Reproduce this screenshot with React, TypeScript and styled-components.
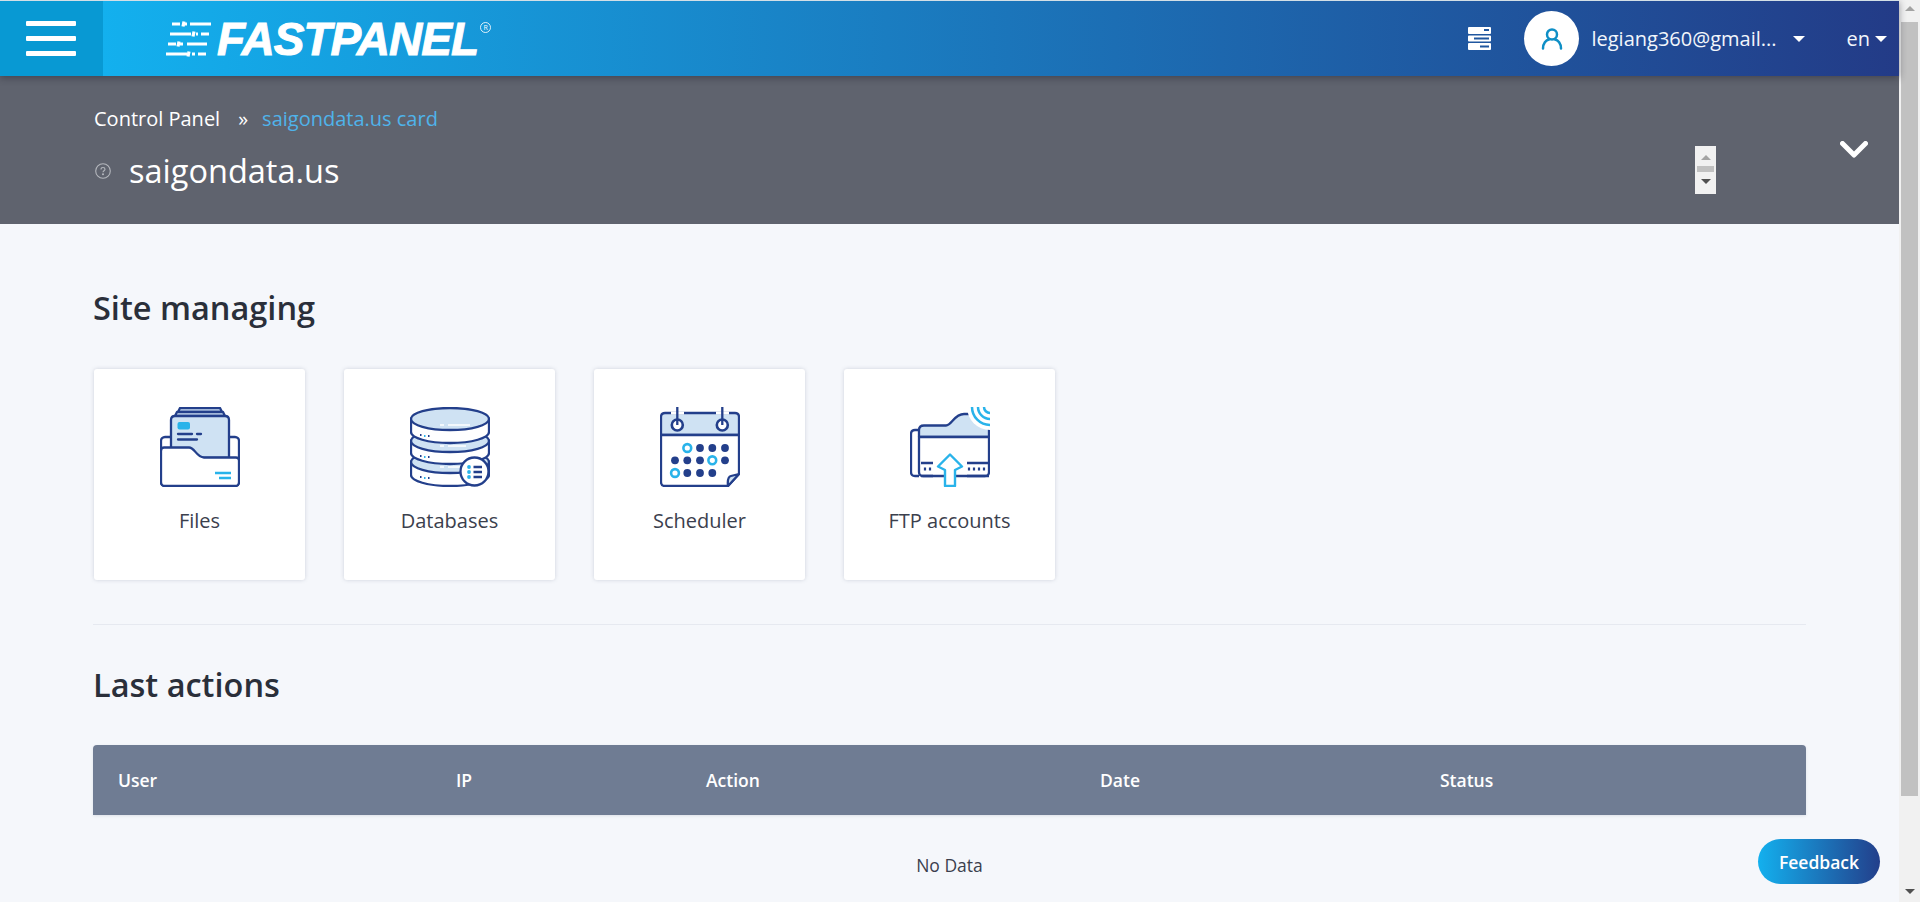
import React from 'react';
import styled, { createGlobalStyle } from 'styled-components';

const NAVY = '#233f8b';
const SKY = '#29b3ea';
const PALE = '#cfe2f3';

const GlobalStyle = createGlobalStyle`
  html, body {
    margin: 0;
    height: 100%;
    overflow: hidden;
    background: #f5f7fb;
    font-family: "Open Sans", "Noto Sans", "Liberation Sans", sans-serif;
  }
  * { box-sizing: border-box; }
`;

const Shell = styled.div`
  display: flex;
  width: 1920px;
  height: 902px;
  overflow: hidden;
`;

const Page = styled.div`
  position: relative;
  width: 1899px;
  flex: none;
  display: flex;
  flex-direction: column;
`;

const Header = styled.header`
  position: relative;
  z-index: 2;
  height: 76px;
  flex: none;
  display: flex;
  align-items: stretch;
  border-top: 1px solid #d3dfe6;
  background: linear-gradient(90deg, #13b0ee 103px, #233b87 100%);
  box-shadow: 0 2px 7px rgba(30, 34, 44, 0.45);
  color: #fff;
`;

const BurgerBlock = styled.div`
  width: 103px;
  flex: none;
  display: flex;
  flex-direction: column;
  justify-content: center;
  gap: 10px;
  padding: 0 27px 0 26px;
  background: #0899d3;
`;

const BurgerLine = styled.span`
  display: block;
  height: 5px;
  border-radius: 1px;
  background: #fff;
`;

const Logo = styled.div`
  display: flex;
  align-items: center;
  margin-left: 62px;
  gap: 6px;
`;

const LogoWord = styled.span`
  font-family: "Liberation Sans", sans-serif;
  font-style: italic;
  font-weight: 700;
  font-size: 46px;
  line-height: 1;
  letter-spacing: -1px;
  color: #fff;
  -webkit-text-stroke: 1px #fff;
`;

const LogoMark = styled.span`
  width: 11px;
  height: 11px;
  margin: -22px 0 0 -4px;
  display: flex;
  align-items: center;
  justify-content: center;
  border: 1px solid rgba(255, 255, 255, 0.85);
  border-radius: 50%;
  font-size: 7px;
  line-height: 1;
`;

const HeaderRight = styled.div`
  margin-left: auto;
  display: flex;
  align-items: center;
  padding-right: 12px;
`;

const Avatar = styled.div`
  width: 55px;
  height: 55px;
  margin-left: 33px;
  display: flex;
  align-items: center;
  justify-content: center;
  border-radius: 50%;
  background: #fff;
`;

const UserName = styled.span`
  margin-left: 12px;
  font-size: 20px;
  line-height: 24px;
  color: #f2f6fb;
`;

const Caret = styled.span<{ $gap: number }>`
  width: 0;
  height: 0;
  margin-left: ${(p) => p.$gap}px;
  border-left: 6px solid transparent;
  border-right: 6px solid transparent;
  border-top: 6px solid #fff;
`;

const Lang = styled.span`
  margin-left: 42px;
  font-size: 20px;
  line-height: 24px;
  color: #f2f6fb;
`;

const Band = styled.section`
  position: relative;
  height: 148px;
  flex: none;
  padding: 30px 0 0 94px;
  background: #5f636e;
  color: #fff;
`;

const Crumbs = styled.div`
  display: flex;
  align-items: center;
  height: 24px;
  font-size: 20px;
`;

const CrumbArrow = styled.span`
  margin: 0 14px 0 18px;
`;

const CrumbLink = styled.span`
  color: #4fb3ea;
`;

const TitleRow = styled.div`
  display: flex;
  align-items: center;
  gap: 18px;
  height: 40px;
  margin-top: 21px;
  padding-left: 1px;
`;

const Title = styled.h1`
  margin: 0;
  font-size: 32.5px;
  font-weight: 400;
  line-height: 40px;
`;

const MiniScroll = styled.div`
  position: absolute;
  left: 1695px;
  top: 70px;
  width: 21px;
  height: 48px;
  display: flex;
  flex-direction: column;
  align-items: center;
  padding-top: 9px;
  background: #f1f1f1;
`;

const MiniThumb = styled.span`
  width: 17px;
  height: 6px;
  margin: 6px 0 7px;
  background: #c1c1c1;
`;

const Arrow = styled.span<{ $dir: 'up' | 'down'; $color: string }>`
  width: 0;
  height: 0;
  flex: none;
  border-left: 5px solid transparent;
  border-right: 5px solid transparent;
  ${(p) => (p.$dir === 'up' ? 'border-bottom' : 'border-top')}: 5px solid ${(p) => p.$color};
`;

const Collapse = styled.div`
  position: absolute;
  left: 1840px;
  top: 65px;
  display: flex;
`;

const Content = styled.main`
  padding: 64px 93px 0;
`;

const Heading = styled.h2`
  margin: 0;
  font-size: 32.5px;
  font-weight: 600;
  line-height: 40px;
  color: #2a2f3a;
`;

const Cards = styled.div`
  display: flex;
  gap: 39px;
  margin: 41px 0 0 1px;
`;

const Card = styled.div`
  width: 211px;
  height: 211px;
  display: flex;
  flex-direction: column;
  align-items: center;
  padding-top: 38px;
  background: #fff;
  border-radius: 3px;
  box-shadow: 0 0 4px rgba(60, 70, 100, 0.2);
`;

const CardLabel = styled.span`
  margin-top: 22px;
  font-size: 20px;
  line-height: 24px;
  color: #3b404d;
`;

const Divider = styled.hr`
  height: 1px;
  margin: 44px 0 40px;
  border: 0;
  background: #e6e9f0;
`;

const TableHead = styled.div`
  display: grid;
  grid-template-columns: 338px 250px 394px 340px 391px;
  align-items: center;
  height: 70px;
  margin-top: 40px;
  border-radius: 4px 4px 0 0;
  background: #6f7c93;
  box-shadow: 0 1px 3px rgba(60, 70, 100, 0.12);
`;

const HeadCell = styled.span`
  padding-left: 25px;
  font-size: 17.5px;
  font-weight: 600;
  line-height: 24px;
  color: #fff;
`;

const Empty = styled.div`
  height: 100px;
  display: flex;
  align-items: center;
  justify-content: center;
  font-size: 17.5px;
  color: #3b404d;
`;

const Feedback = styled.button`
  position: absolute;
  left: 1758px;
  top: 839px;
  width: 122px;
  height: 45px;
  padding: 0;
  border: 0;
  border-radius: 23px;
  background: linear-gradient(90deg, #13b0ee, #233f8b);
  color: #fff;
  font-family: inherit;
  font-size: 17.5px;
  font-weight: 600;
`;

const Scrollbar = styled.aside`
  width: 21px;
  flex: none;
  display: flex;
  flex-direction: column;
  align-items: center;
  background: #f1f1f1;
`;

const ScrollThumb = styled.div`
  width: 17px;
  height: 774px;
  margin-top: 5px;
  background: #c1c1c1;
`;

const ScrollEnd = styled.div`
  height: 17px;
  display: flex;
  align-items: center;
  justify-content: center;
`;

const ScrollEndBottom = styled(ScrollEnd)`
  margin-top: auto;
  height: 22px;
`;

const LogoIcon = () => (
  <svg width="46" height="36" viewBox="0 0 46 36" fill="none" stroke="#fff" strokeWidth="2.800">
    <path d="M7 3h8M19 3h3M25 3h21" />
    <path d="M5 13h21M31 13h2M36 13h8" />
    <path d="M3 23h8M15 23h3M22 23h20" />
    <path d="M1 33h21M27 33h3M33 33h8" />
    <path d="M19 0.500l-1 5M29 10.500l-1 5M14 20.500l-1 5M24 30.500l-1 5" strokeWidth="3.200" />
  </svg>
);

const ServerIcon = () => (
  <svg width="23" height="23" viewBox="0 0 23 23">
    <path
      fill="#fff"
      fillRule="evenodd"
      d="M1 0h21a1 1 0 0 1 1 1v5a1 1 0 0 1-1 1H1a1 1 0 0 1-1-1V1a1 1 0 0 1 1-1zm15 2v2h5V2zM1 8.500h21a1 1 0 0 1 1 1v4a1 1 0 0 1-1 1H1a1 1 0 0 1-1-1v-4a1 1 0 0 1 1-1zm5 2v2h15v-2zM1 16h21a1 1 0 0 1 1 1v5a1 1 0 0 1-1 1H1a1 1 0 0 1-1-1v-5a1 1 0 0 1 1-1zm11 2.500v2h9v-2z"
    />
  </svg>
);

const PersonIcon = () => (
  <svg width="22" height="22" viewBox="0 0 22 22" fill="none" stroke="#0f8fc6" strokeWidth="2.500">
    <circle cx="11" cy="6.500" r="5" />
    <path d="M2 20.500c0-5 3-8.500 6-9M20 20.500c0-5-3-8.500-6-9" strokeLinecap="round" />
  </svg>
);

const HelpIcon = () => (
  <svg width="16" height="16" viewBox="0 0 16 16" fill="none" stroke="#b4b7bd" strokeWidth="1.100">
    <circle cx="8" cy="8" r="7.300" />
    <path d="M6 6.400c0-1.200.9-1.900 2-1.900s2 .7 2 1.800c0 1.500-2 1.500-2 3" />
    <circle cx="8" cy="11.300" r=".5" />
  </svg>
);

const Chevron = () => (
  <svg width="28" height="17" viewBox="0 0 28 17" fill="none" stroke="#fff" strokeWidth="5" strokeLinecap="round" strokeLinejoin="round">
    <path d="M2.500 2.500L14 14 25.500 2.500" />
  </svg>
);

const FilesIcon = () => (
  <svg width="80" height="80" viewBox="0 0 80 80" fill="none" stroke={NAVY} strokeWidth="2.300" strokeLinejoin="round">
    <rect x="1" y="30" width="78" height="49" rx="4" fill="#fff" />
    <path d="M18 5l2-4h40l2 4z" fill={PALE} />
    <path d="M15 9l2-4h46l2 4z" fill={PALE} />
    <path d="M11 51V13q0-4 4-4h50q4 0 4 4v38z" fill={PALE} />
    <rect x="17.500" y="15" width="12.500" height="7.500" rx="2" fill={SKY} stroke="none" />
    <path d="M18 27h14M37 27h4M18 32.500h19" strokeLinecap="round" />
    <path d="M1 44q0-3.500 3-3.500h25c6 0 7 9.500 15 10h32q3 0 3 3V75q0 4-4 4H5q-4 0-4-4z" fill="#fff" />
    <path d="M55 66h16M59 71h12" stroke={SKY} />
  </svg>
);

const DatabasesIcon = () => (
  <svg width="80" height="80" viewBox="0 0 80 80" fill="none" stroke={NAVY} strokeWidth="2.300">
    <path d="M1 55v13c0 6 17 11 39 11s39-5 39-11V55z" fill="#fff" />
    <ellipse cx="40" cy="55" rx="39" ry="11" fill={PALE} />
    <path d="M1 34v12c0 6 17 11 39 11s39-5 39-11V34z" fill="#fff" />
    <ellipse cx="40" cy="34" rx="39" ry="11" fill={PALE} />
    <path d="M1 12v13c0 6 17 11 39 11s39-5 39-11V12z" fill="#fff" />
    <ellipse cx="40" cy="12" rx="39" ry="11" fill={PALE} />
    <path d="M30 18h4M38 18h22M30 39h4M38 39h18M30 60h4M38 60h12" stroke="#fff" strokeWidth="1.500" />
    <path d="M10 28h1.500M18 29h1.500M10 49h1.500M18 50h1.500M10 70h1.500M18 71h1.500" strokeWidth="1.800" />
    <path d="M14 29h1.500M14 50h1.500M14 71h1.500" stroke={SKY} strokeWidth="1.800" />
    <circle cx="64.500" cy="64.500" r="14" fill="#fff" />
    <circle cx="59" cy="60" r="1.900" fill={SKY} stroke="none" />
    <circle cx="59" cy="65" r="1.900" fill={SKY} stroke="none" />
    <circle cx="59" cy="70" r="1.900" fill={SKY} stroke="none" />
    <path d="M63.500 60h8.500M63.500 65h8.500M63.500 70h8.500" />
  </svg>
);

const calendarDots: [number, number, boolean][] = [
  [27.3, 41, true], [40, 41, false], [52.3, 41, false], [65, 41, false],
  [15, 53.3, false], [27.3, 53.3, false], [40, 53.3, false], [52.3, 53.3, true], [65, 53.3, false],
  [15, 66, true], [27.3, 66, false], [40, 66, false], [52.3, 66, false],
];

const SchedulerIcon = () => (
  <svg width="80" height="80" viewBox="0 0 80 80" fill="none" stroke={NAVY} strokeWidth="2.300" strokeLinejoin="round">
    <path d="M1 28V10q0-4 4-4h70q4 0 4 4v18z" fill={PALE} />
    <path d="M1 28v47q0 4 4 4h63l11-12V28" fill="#fff" />
    <path d="M1 28h78" />
    <path d="M68 79q-1-9 3-10l8-2-11 12z" fill={PALE} />
    <path d="M11 6h13M56 6h13" stroke="#fff" strokeWidth="3" />
    <circle cx="17.300" cy="18" r="5.500" fill="#fff" strokeWidth="2.600" />
    <circle cx="62.300" cy="18" r="5.500" fill="#fff" strokeWidth="2.600" />
    <path d="M17.300 0v18M62.300 0v18" />
    {calendarDots.map(([x, y, ring]) =>
      ring ? (
        <circle key={`${x}-${y}`} cx={x} cy={y} r="3.900" fill="#fff" stroke={SKY} strokeWidth="2.600" />
      ) : (
        <circle key={`${x}-${y}`} cx={x} cy={y} r="3.900" fill={NAVY} stroke="none" />
      ),
    )}
  </svg>
);

const FtpIcon = () => (
  <svg width="80" height="80" viewBox="0 0 80 80" fill="none" stroke={NAVY} strokeWidth="2.300" strokeLinejoin="round">
    <path d="M9 69H5q-4 0-4-4V27q0-4 4-4h4" fill="#fff" />
    <path d="M9 30V23q0-4.500 5-4.500h22c6 0 8-11.500 18-11.500h10l15 14v9z" fill={PALE} />
    <path d="M9 30h70v35q0 4-4 4H13q-4 0-4-4z" fill="#fff" />
    <path d="M11 56h12M57 56h22M11 69h12M57 69h22" />
    <path d="M15 60.500v3M20 60.500v3M59 60.500v3M64 60.500v3M69 60.500v3M74 60.500v3" strokeWidth="2.200" />
    <circle cx="80" cy="0" r="23" fill="#fff" stroke="none" />
    <path d="M80 6a6 6 0 0 1-6-6M80 12a12 12 0 0 1-12-12M80 18a18 18 0 0 1-18-18" stroke={SKY} strokeWidth="2.500" />
    <path d="M40 47.500L28 59.500l7 3.500V79h10V63l7-3.500z" fill="#fff" stroke={SKY} strokeWidth="2.400" />
  </svg>
);

const cards = [
  { label: 'Files', icon: <FilesIcon /> },
  { label: 'Databases', icon: <DatabasesIcon /> },
  { label: 'Scheduler', icon: <SchedulerIcon /> },
  { label: 'FTP accounts', icon: <FtpIcon /> },
];

const columns = ['User', 'IP', 'Action', 'Date', 'Status'];

const App = () => (
  <Shell>
    <GlobalStyle />
    <Page>
      <Header>
        <BurgerBlock>
          <BurgerLine />
          <BurgerLine />
          <BurgerLine />
        </BurgerBlock>
        <Logo>
          <LogoIcon />
          <LogoWord>FASTPANEL</LogoWord>
          <LogoMark>R</LogoMark>
        </Logo>
        <HeaderRight>
          <ServerIcon />
          <Avatar>
            <PersonIcon />
          </Avatar>
          <UserName>legiang360@gmail...</UserName>
          <Caret $gap={16} />
          <Lang>en</Lang>
          <Caret $gap={5} />
        </HeaderRight>
      </Header>
      <Band>
        <Crumbs>
          Control Panel
          <CrumbArrow>»</CrumbArrow>
          <CrumbLink>saigondata.us card</CrumbLink>
        </Crumbs>
        <TitleRow>
          <HelpIcon />
          <Title>saigondata.us</Title>
        </TitleRow>
        <MiniScroll>
          <Arrow $dir="up" $color="#a3a3a3" />
          <MiniThumb />
          <Arrow $dir="down" $color="#505050" />
        </MiniScroll>
        <Collapse>
          <Chevron />
        </Collapse>
      </Band>
      <Content>
        <Heading>Site managing</Heading>
        <Cards>
          {cards.map((card) => (
            <Card key={card.label}>
              {card.icon}
              <CardLabel>{card.label}</CardLabel>
            </Card>
          ))}
        </Cards>
        <Divider />
        <Heading>Last actions</Heading>
        <TableHead>
          {columns.map((col) => (
            <HeadCell key={col}>{col}</HeadCell>
          ))}
        </TableHead>
        <Empty>No Data</Empty>
      </Content>
      <Feedback>Feedback</Feedback>
    </Page>
    <Scrollbar>
      <ScrollEnd>
        <Arrow $dir="up" $color="#a3a3a3" />
      </ScrollEnd>
      <ScrollThumb />
      <ScrollEndBottom>
        <Arrow $dir="down" $color="#505050" />
      </ScrollEndBottom>
    </Scrollbar>
  </Shell>
);

export default App;
